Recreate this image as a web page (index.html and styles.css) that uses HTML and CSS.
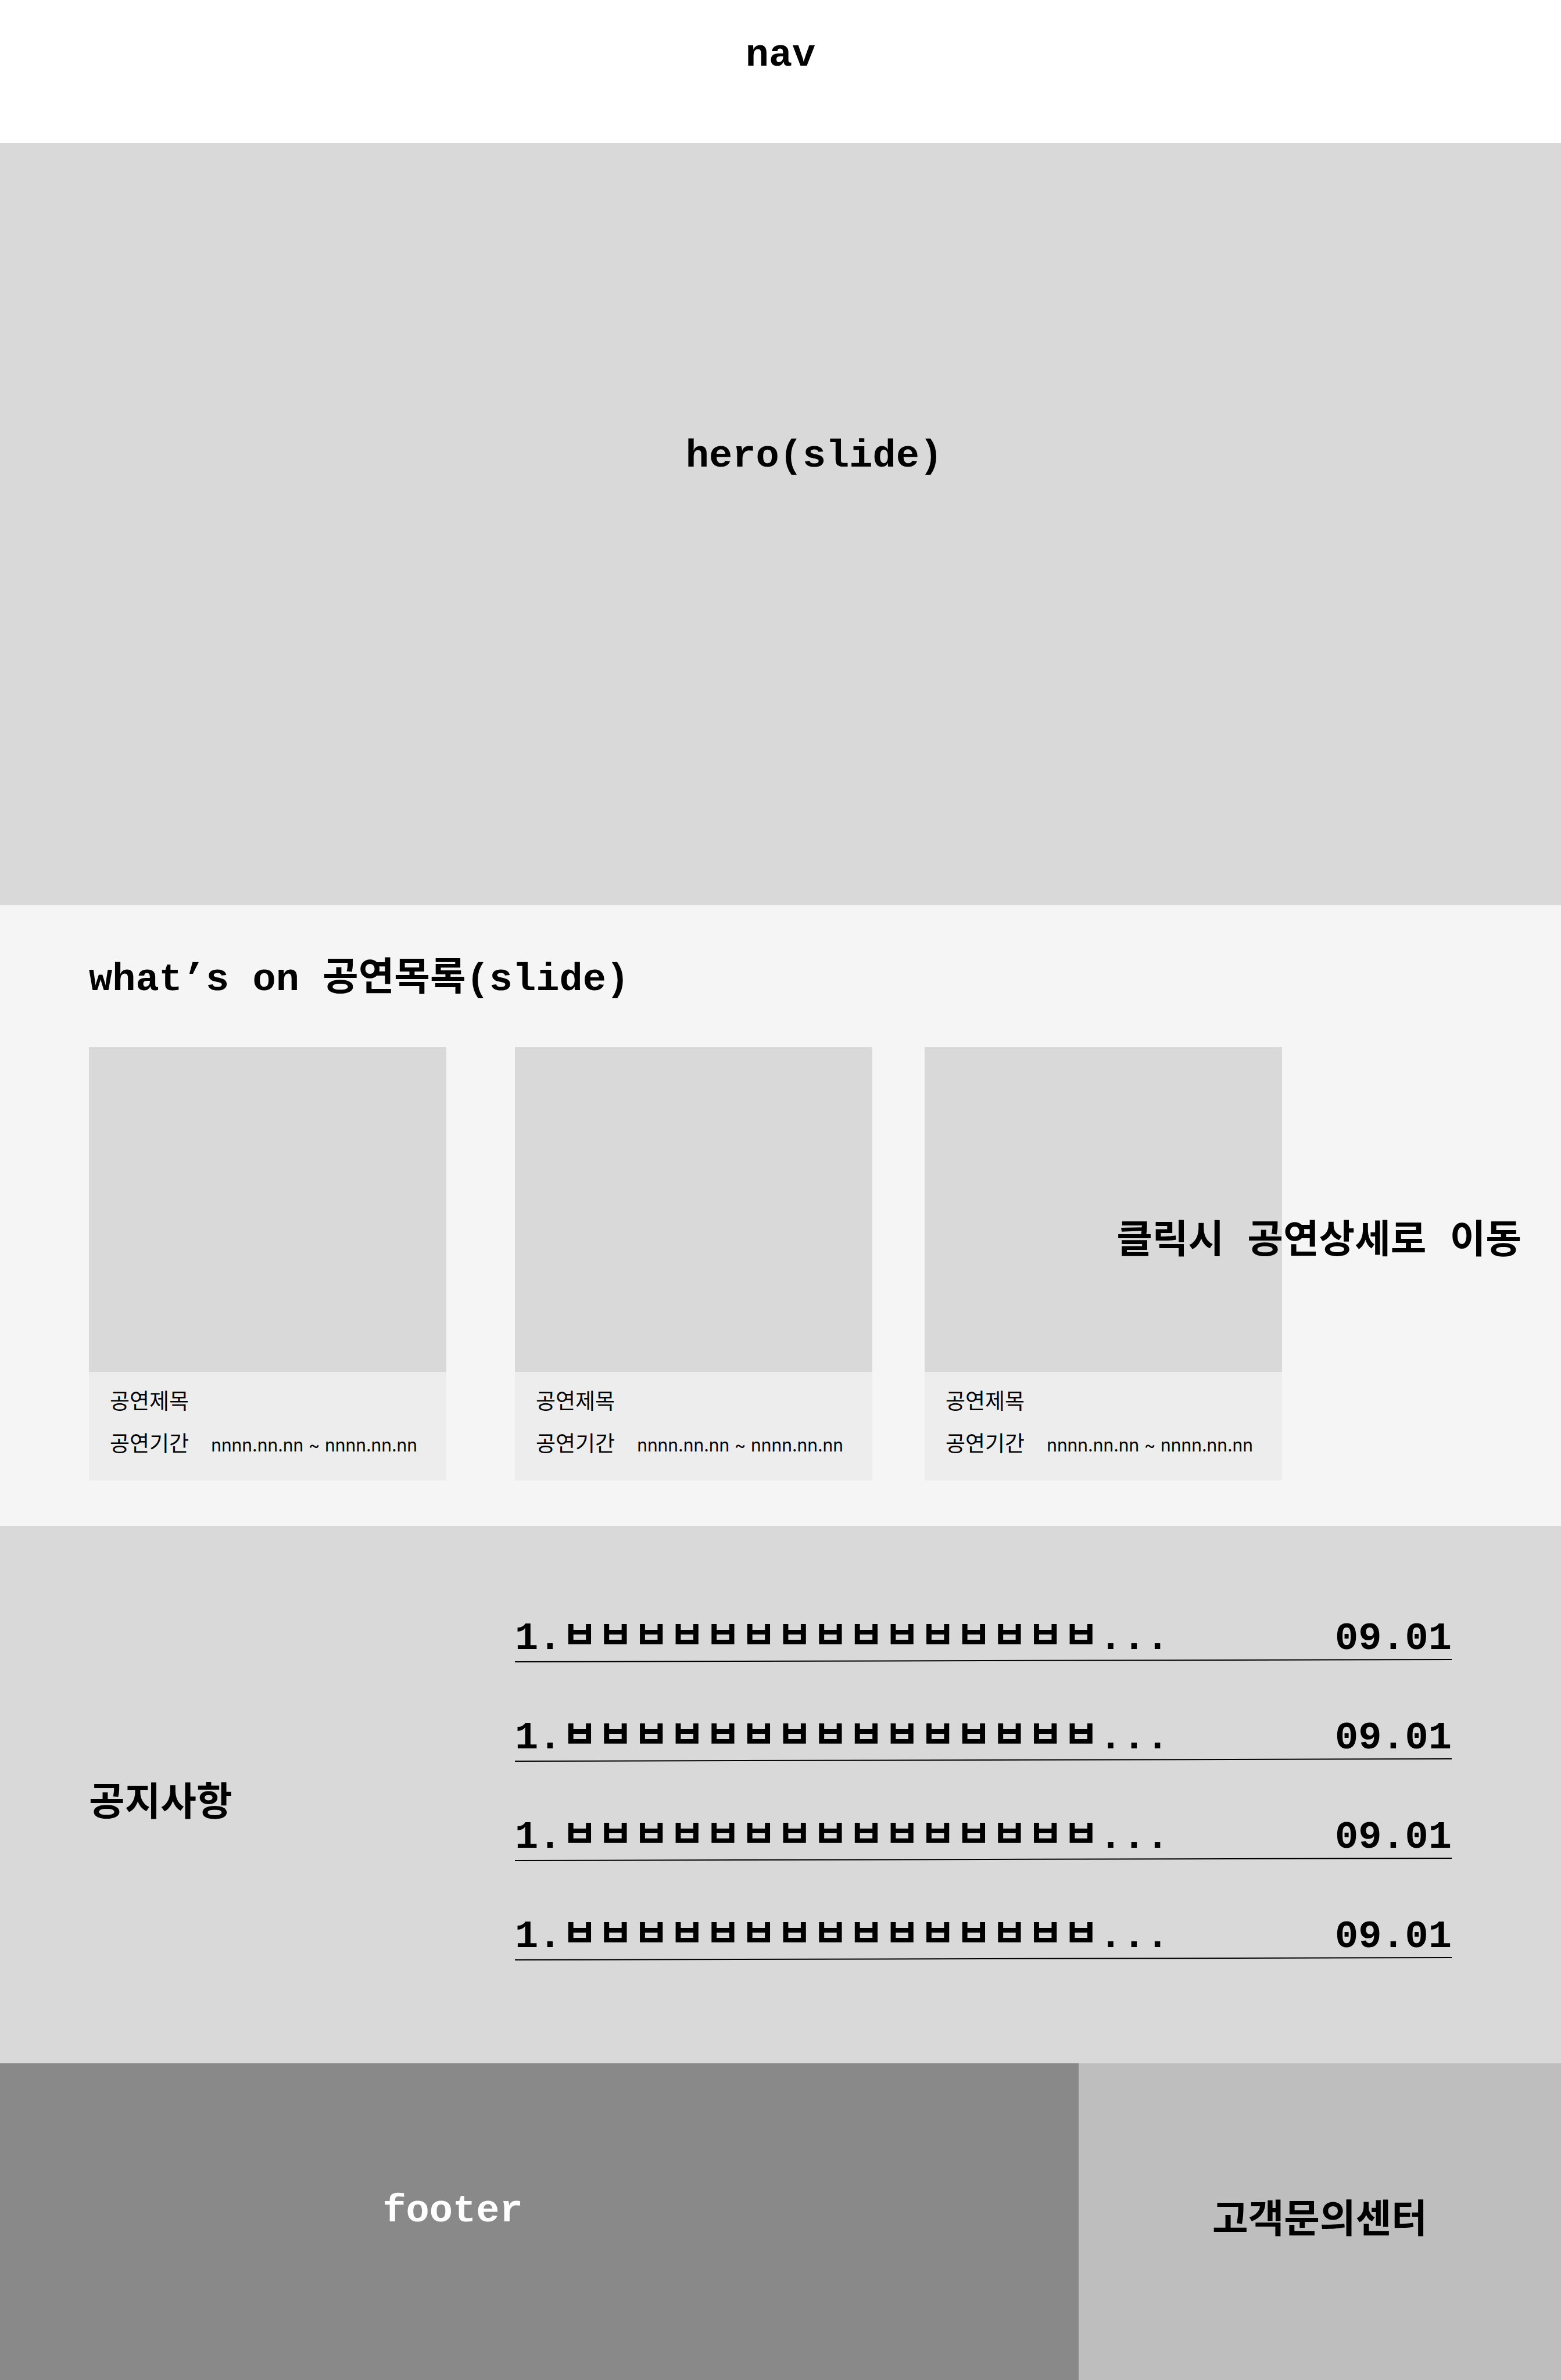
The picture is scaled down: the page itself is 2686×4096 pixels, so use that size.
FILE: index.html
```html
<!DOCTYPE html>
<html lang="ko">
<head>
  <meta charset="utf-8">
  <meta name="viewport" content="width=device-width, initial-scale=1">
  <title>공연</title>
  <link rel="stylesheet" href="styles.css">
</head>
<body>
  <nav class="nav">nav</nav>

  <main>
    <section class="hero">
      <h1 class="title">hero(slide)</h1>
    </section>

    <section class="shows">
      <h2 class="title">what’s on 공연목록(slide)</h2>
      <div class="shows-track">
        <article class="card card-first">
          <div class="card-poster"></div>
          <div class="card-body">
            <h3 class="card-label">공연제목</h3>
            <p class="card-period"><span>공연기간</span><span class="card-dates">nnnn.nn.nn ~ nnnn.nn.nn</span></p>
          </div>
        </article>
        <article class="card card-second">
          <div class="card-poster"></div>
          <div class="card-body">
            <h3 class="card-label">공연제목</h3>
            <p class="card-period"><span>공연기간</span><span class="card-dates">nnnn.nn.nn ~ nnnn.nn.nn</span></p>
          </div>
        </article>
        <article class="card card-third">
          <div class="card-poster"></div>
          <div class="card-body">
            <h3 class="card-label">공연제목</h3>
            <p class="card-period"><span>공연기간</span><span class="card-dates">nnnn.nn.nn ~ nnnn.nn.nn</span></p>
          </div>
        </article>
        <p class="shows-note">클릭시 공연상세로 이동</p>
      </div>
    </section>

    <section class="notices">
      <h2 class="title notices-title">공지사항</h2>
      <ul class="notice-list">
        <li>
          <div class="notice-row"><span>1.ㅂㅂㅂㅂㅂㅂㅂㅂㅂㅂㅂㅂㅂㅂㅂ...</span><time>09.01</time></div>
          <svg class="notice-rule" viewBox="0 0 1612 6" preserveAspectRatio="none" aria-hidden="true"><line x1="0" y1="5" x2="1612" y2="1"/></svg>
        </li>
        <li>
          <div class="notice-row"><span>1.ㅂㅂㅂㅂㅂㅂㅂㅂㅂㅂㅂㅂㅂㅂㅂ...</span><time>09.01</time></div>
          <svg class="notice-rule" viewBox="0 0 1612 6" preserveAspectRatio="none" aria-hidden="true"><line x1="0" y1="5" x2="1612" y2="1"/></svg>
        </li>
        <li>
          <div class="notice-row"><span>1.ㅂㅂㅂㅂㅂㅂㅂㅂㅂㅂㅂㅂㅂㅂㅂ...</span><time>09.01</time></div>
          <svg class="notice-rule" viewBox="0 0 1612 6" preserveAspectRatio="none" aria-hidden="true"><line x1="0" y1="5" x2="1612" y2="1"/></svg>
        </li>
        <li>
          <div class="notice-row"><span>1.ㅂㅂㅂㅂㅂㅂㅂㅂㅂㅂㅂㅂㅂㅂㅂ...</span><time>09.01</time></div>
          <svg class="notice-rule" viewBox="0 0 1612 6" preserveAspectRatio="none" aria-hidden="true"><line x1="0" y1="5" x2="1612" y2="1"/></svg>
        </li>
      </ul>
    </section>
  </main>

  <footer class="footer">
    <div class="footer-main">footer</div>
    <div class="footer-support">고객문의센터</div>
  </footer>
</body>
</html>
```
FILE: styles.css
```css
* {
  box-sizing: border-box;
  margin: 0;
  padding: 0;
}

body {
  background: #ffffff;
  color: #000000;
  font: bold 67px/80px "Liberation Mono", "Noto Sans CJK KR", monospace;
}

.title {
  font-size: 67px;
  font-weight: bold;
}

.nav {
  padding: 55px 0 111px;
  text-align: center;
}

.hero {
  padding: 499px 0 733px 116px;
  background: #d9d9d9;
  text-align: center;
}

/* Show list */
.shows {
  padding: 88px 0 78px 153px;
  background: #f5f5f5;
}

.shows-track {
  position: relative;
  display: grid;
  grid-template-columns: 615fr 118fr 615fr 90fr 615fr 480fr;
  margin-top: 76px;
}

.card-first {
  grid-column: 1;
}

.card-second {
  grid-column: 3;
}

.card-third {
  grid-column: 5;
}

.card-poster {
  aspect-ratio: 615 / 559;
  background: #d9d9d9;
}

.card-body {
  display: grid;
  gap: 25px;
  padding: 24px 36px 42px;
  background: #ededed;
  font: 37px/48px "Noto Sans CJK KR", sans-serif;
}

.card-label {
  font-size: 37px;
  font-weight: normal;
}

.card-period {
  display: flex;
  align-items: baseline;
  gap: 38px;
  white-space: nowrap;
}

.card-dates {
  font-family: Inter, "Noto Sans CJK KR", sans-serif;
  font-size: 30px;
  line-height: 36px;
}

/* Floating remark over the last card */
.shows-note {
  position: absolute;
  top: 296px;
  right: 68px;
  white-space: nowrap;
}

/* Notices */
.notices {
  display: grid;
  grid-template-columns: 733fr 1612fr;
  align-items: center;
  padding: 159px 188px 177px 153px;
  background: #d9d9d9;
}

.notices-title {
  padding-top: 52px;
}

.notice-list {
  display: grid;
  gap: 95px;
  list-style: none;
}

.notice-row {
  display: flex;
  justify-content: space-between;
  line-height: 70px;
  white-space: nowrap;
}

.notice-rule {
  display: block;
  width: 100%;
  height: 6px;
  overflow: visible;
}

.notice-rule line {
  stroke: #000000;
  stroke-width: 2;
}

/* Footer */
.footer {
  display: grid;
  grid-template-columns: 1856fr 830fr;
  min-height: 545px;
}

.footer-main,
.footer-support {
  display: flex;
  align-items: center;
  justify-content: center;
}

.footer-main {
  padding: 0 298px 38px 0;
  background: #898989;
  color: #ffffff;
}

.footer-support {
  background: #bebebe;
}
```
